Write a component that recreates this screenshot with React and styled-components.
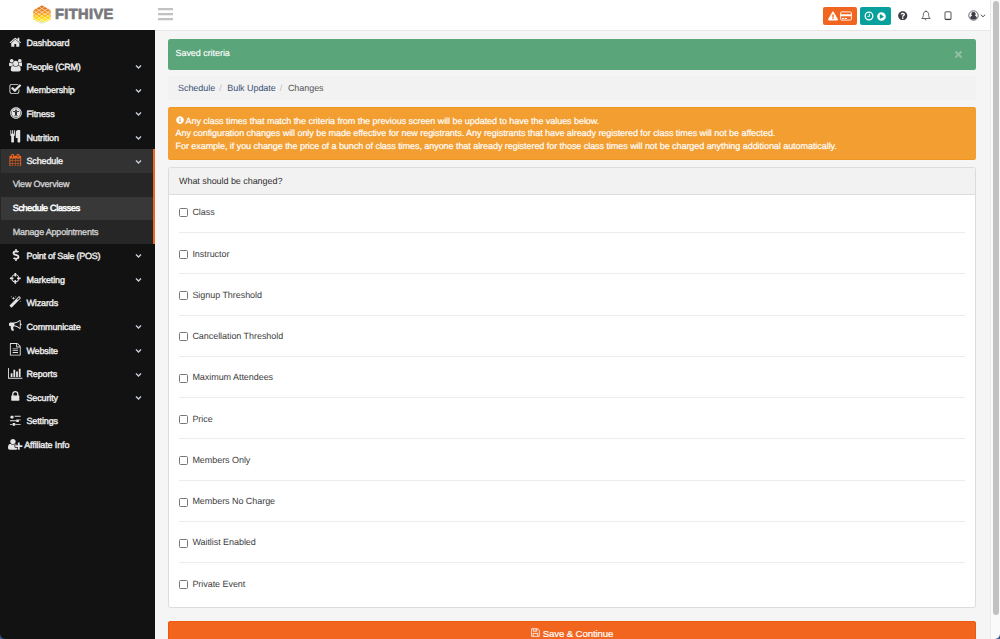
import React from "react";
import styled, { createGlobalStyle, css } from "styled-components";
import {
  FaUniversalAccess,
  FaDollarSign,
  FaExclamationTriangle,
  FaQuestionCircle,
  FaInfoCircle,
  FaPlayCircle,
} from "react-icons/fa";

const Global = createGlobalStyle`
  * { box-sizing: border-box; }
  body {
    margin: 0;
    overflow: hidden;
    background: #f5f5f5;
    color: #3e3e3e;
    font: 9px/12.86px "Liberation Sans", Arial, sans-serif;
    letter-spacing: -0.052px;
    text-rendering: geometricPrecision;
  }
`;

const GLYPHS = {
  home: ["0 0 1792 1792", "M1472 992v480q0 26-19 45t-45 19h-384v-384h-256v384h-384q-26 0-45-19t-19-45v-480q0-1 .5-3t.5-3l575-474 575 474q1 2 1 6zm223-69l-62 74q-8 9-21 11h-3q-13 0-21-7l-692-577-692 577q-12 8-24 7-13-2-21-11l-62-74q-8-10-7-23.5t11-21.5l719-599q32-26 76-26t76 26l244 204v-195q0-14 9-23t23-9h192q14 0 23 9t9 23v408l219 182q10 8 11 21.5t-7 23.5z"],
  users: ["-64 0 1920 1792", "M529 896q-162 5-265 128h-134q-82 0-138-40.5t-56-118.5q0-353 124-353 6 0 43.5 21t97.5 42.5 119 21.5q67 0 133-23-5 37-5 66 0 159 93 293zm1071 637q0 120-73 189.5t-194 69.5h-874q-121 0-194-69.5t-73-189.5q0-53 3.5-103.5t14-109 26.5-108.5 43-97.5 62-81 85.5-53.5 111.5-20q10 0 43 21.5t73 48 107 48 135 21.5 135-21.5 107-48 73-48 43-21.5q61 0 111.5 20t85.5 53.5 62 81 43 97.5 26.5 108.5 14 109 3.5 103.5zm-1024-1277q0 106-75 181t-181 75-181-75-75-181 75-181 181-75 181 75 75 181zm704 384q0 159-112.5 271.5t-271.5 112.5-271.5-112.5-112.5-271.5 112.5-271.5 271.5-112.5 271.5 112.5 112.5 271.5zm576 225q0 78-56 118.5t-138 40.5h-134q-103-123-265-128 93-134 93-293 0-29-5-66 66 23 133 23 59 0 119-21.5t97.5-42.5 43.5-21q124 0 124 353zm-128-609q0 106-75 181t-181 75-181-75-75-181 75-181 181-75 181 75 75 181z"],
  check: ["0 0 1792 1792", "M1472 930v318q0 119-84.5 203.5t-203.5 84.5h-832q-119 0-203.5-84.5t-84.5-203.5v-832q0-119 84.5-203.5t203.5-84.5h832q63 0 117 25 15 7 18 23 3 17-9 29l-49 49q-10 10-23 10-3 0-9-2-23-6-45-6h-832q-66 0-113 47t-47 113v832q0 66 47 113t113 47h832q66 0 113-47t47-113v-254q0-13 9-22l64-64q10-10 23-10 6 0 12 3 20 8 20 29zm231-489l-814 814q-24 24-57 24t-57-24l-430-430q-24-24-24-57t24-57l110-110q24-24 57-24t57 24l263 263 647-647q24-24 57-24t57 24l110 110q24 24 24 57t-24 57z"],
  cutlery: ["0 0 1792 1792", "M832 64v640q0 61-35.5 111t-92.5 70v779q0 52-38 90t-90 38h-128q-52 0-90-38t-38-90v-779q-57-20-92.5-70t-35.5-111v-640q0-26 19-45t45-19 45 19 19 45v416q0 26 19 45t45 19 45-19 19-45v-416q0-26 19-45t45-19 45 19 19 45v416q0 26 19 45t45 19 45-19 19-45v-416q0-26 19-45t45-19 45 19 19 45zm768 0v1600q0 52-38 90t-90 38h-128q-52 0-90-38t-38-90v-512h-224q-13 0-22.5-9.5t-9.5-22.5v-800q0-132 94-226t226-94h256q26 0 45 19t19 45z"],
  calendar: ["0 0 1792 1792", "M192 1664h288v-288h-288v288zm352 0h320v-288h-320v288zm-352-352h288v-320h-288v320zm352 0h320v-320h-320v320zm-352-384h288v-288h-288v288zm736 736h320v-288h-320v288zm-384-736h320v-288h-320v288zm768 736h288v-288h-288v288zm-384-352h320v-320h-320v320zm-352-864v-288q0-13-9.5-22.5t-22.5-9.5h-64q-13 0-22.5 9.5t-9.5 22.5v288q0 13 9.5 22.5t22.5 9.5h64q13 0 22.5-9.5t9.5-22.5zm736 864h288v-320h-288v320zm-384-384h320v-288h-320v288zm384 0h288v-288h-288v288zm32-480v-288q0-13-9.5-22.5t-22.5-9.5h-64q-13 0-22.5 9.5t-9.5 22.5v288q0 13 9.5 22.5t22.5 9.5h64q13 0 22.5-9.5t9.5-22.5zm384-64v1280q0 52-38 90t-90 38h-1408q-52 0-90-38t-38-90v-1280q0-52 38-90t90-38h128v-96q0-66 47-113t113-47h64q66 0 113 47t47 113v96h384v-96q0-66 47-113t113-47h64q66 0 113 47t47 113v96h128q52 0 90 38t38 90z"],
  crosshairs: ["0 0 1792 1792", "M1325 1024h-109q-26 0-45-19t-19-45v-128q0-26 19-45t45-19h109q-32-108-112.5-188.5t-188.5-112.5v109q0 26-19 45t-45 19h-128q-26 0-45-19t-19-45v-109q-108 32-188.5 112.5t-112.5 188.5h109q26 0 45 19t19 45v128q0 26-19 45t-45 19h-109q32 108 112.5 188.5t188.5 112.5v-109q0-26 19-45t45-19h128q26 0 45 19t19 45v109q108-32 188.5-112.5t112.5-188.5zm339-192v128q0 26-19 45t-45 19h-143q-37 161-154.5 278.5t-278.5 154.5v143q0 26-19 45t-45 19h-128q-26 0-45-19t-19-45v-143q-161-37-278.5-154.5t-154.5-278.5h-143q-26 0-45-19t-19-45v-128q0-26 19-45t45-19h143q37-161 154.5-278.5t278.5-154.5v-143q0-26 19-45t45-19h128q26 0 45 19t19 45v143q161 37 278.5 154.5t154.5 278.5h143q26 0 45 19t19 45z"],
  magic: ["0 0 1792 1792", "M1254 581l293-293-107-107-293 293zm447-293q0 27-18 45l-1286 1286q-18 18-45 18t-45-18l-198-198q-18-18-18-45t18-45l1286-1286q18-18 45-18t45 18l198 198q18 18 18 45zm-1351-190l98 30-98 30-30 98-30-98-98-30 98-30 30-98zm350 162l196 60-196 60-60 196-60-196-196-60 196-60 60-196zm930 478l98 30-98 30-30 98-30-98-98-30 98-30 30-98zm-640-640l98 30-98 30-30 98-30-98-98-30 98-30 30-98z"],
  bullhorn: ["0 0 1792 1792", "M1664 640q53 0 90.5 37.5t37.5 90.5-37.5 90.5-90.5 37.5v384q0 52-38 90t-90 38q-417-347-812-380-58 19-91 66t-31 100.5 40 92.5q-20 33-23 65.5t6 58 33.5 55 48 50 61.5 50.5q-29 58-111.5 83t-168.5 11.5-132-55.5q-7-23-29.5-87.5t-32-94.5-23-89-15-101 3.5-98.5 22-110.5h-122q-66 0-113-47t-47-113v-192q0-66 47-113t113-47h480q435 0 896-384 52 0 90 38t38 90v384zm-128 604v-954q-394 302-768 343v270q377 42 768 341z"],
  file: ["0 0 1792 1792", "M1596 380q28 28 48 76t20 88v1152q0 40-28 68t-68 28h-1344q-40 0-68-28t-28-68v-1600q0-40 28-68t68-28h896q40 0 88 20t76 48zm-444-244v376h376q-10-29-22-41l-313-313q-12-12-41-22zm384 1528v-1024h-416q-40 0-68-28t-28-68v-416h-768v1536h1280zm-1024-864q0-14 9-23t23-9h704q14 0 23 9t9 23v64q0 14-9 23t-23 9h-704q-14 0-23-9t-9-23v-64zm736 224q14 0 23 9t9 23v64q0 14-9 23t-23 9h-704q-14 0-23-9t-9-23v-64q0-14 9-23t23-9h704zm0 256q14 0 23 9t9 23v64q0 14-9 23t-23 9h-704q-14 0-23-9t-9-23v-64q0-14 9-23t23-9h704z"],
  chart: ["0 0 2048 1792", "M640 896v512h-256v-512h256zm384-512v1024h-256v-1024h256zm1024 1152v128h-2048v-1536h128v1408h1920zm-640-896v768h-256v-768h256zm384-384v1152h-256v-1152h256z"],
  lock: ["0 0 1792 1792", "M640 768h512v-192q0-106-75-181t-181-75-181 75-75 181v192zm832 96v576q0 40-28 68t-68 28h-960q-40 0-68-28t-28-68v-576q0-40 28-68t68-28h32v-192q0-184 132-316t316-132 316 132 132 316v192h32q40 0 68 28t28 68z"],
  sliders: ["0 0 1792 1792", "M480 1408v128h-352v-128h352zm352-128q26 0 45 19t19 45v256q0 26-19 45t-45 19h-256q-26 0-45-19t-19-45v-256q0-26 19-45t45-19h256zm160-384v128h-864v-128h864zm-640-512v128h-224v-128h224zm1312 1024v128h-736v-128h736zm-1088-1152q26 0 45 19t19 45v256q0 26-19 45t-45 19h-256q-26 0-45-19t-19-45v-256q0-26 19-45t45-19h256zm768 512q26 0 45 19t19 45v256q0 26-19 45t-45 19h-256q-26 0-45-19t-19-45v-256q0-26 19-45t45-19h256zm320 0v128h-224v-128h224zm0-512v128h-864v-128h864z"],
  userPlus: ["0 0 2048 1792", "M704 896q-159 0-271.5-112.5t-112.5-271.5 112.5-271.5 271.5-112.5 271.5 112.5 112.5 271.5-112.5 271.5-271.5 112.5zm960 128h352q13 0 22.5 9.5t9.5 22.5v192q0 13-9.5 22.5t-22.5 9.5h-352v352q0 13-9.5 22.5t-22.5 9.5h-192q-13 0-22.5-9.5t-9.5-22.5v-352h-352q-13 0-22.5-9.5t-9.5-22.5v-192q0-13 9.5-22.5t22.5-9.5h352v-352q0-13 9.5-22.5t22.5-9.5h192q13 0 22.5 9.5t9.5 22.5v352zm-736 224q0 52 38 90t90 38h256v238q-68 50-171 50h-874q-121 0-194-69t-73-190q0-53 3.5-103.5t14-109 26.5-108.5 43-97.5 62-81 85.5-53.5 111.5-20q19 0 39 17 79 61 154.5 91.5t164.5 30.5 164.5-30.5 154.5-91.5q20-17 39-17 132 0 217 96h-223q-52 0-90 38t-38 90v192z"],
};

const GlyphSvg = styled.svg`
  display: block;
  height: 12.6px;
  width: auto;
  fill: currentColor;
`;

const Glyph = ({ name }) => (
  <GlyphSvg viewBox={GLYPHS[name][0]}>
    <path d={GLYPHS[name][1]} />
  </GlyphSvg>
);

/* ---------- frame ---------- */

const Window = styled.div`
  display: flex;
  width: 1000px;
  height: 639px;
  overflow: hidden;
  position: relative;
`;

const Page = styled.div`
  flex: 1;
  display: flex;
  flex-direction: column;
  min-width: 0;
`;

const ScrollTrack = styled.div`
  width: 10px;
  padding: 1px 2px 0 2px;
  background: #fafafa;
  border-left: 1px solid #e9e9e9;
`;

const ScrollThumb = styled.div`
  width: 6px;
  height: 614px;
  border-radius: 3px;
  background: #c1c1c1;
`;

const Corner = styled.svg`
  position: absolute;
  bottom: 0;
  ${(p) => (p.$right ? "right: 0;" : "left: 0;")}
`;

/* ---------- header ---------- */

const Header = styled.header`
  display: flex;
  align-items: center;
  height: 31px;
  flex: none;
  background: linear-gradient(90deg, #121212 155px, #e7e7e7 155px) bottom / 100% 1px no-repeat #fff;
`;

const Brand = styled.div`
  display: flex;
  align-items: center;
  width: 155px;
  padding: 0 0 2px 33px;
  gap: 4px;
`;

const BrandName = styled.span`
  padding-top: 1px;
  font-size: 14.6px;
  line-height: 18px;
  font-weight: 700;
  letter-spacing: 0.4px;
  color: #77787b;
  -webkit-text-stroke: 0.7px #77787b;
`;

const MenuToggle = styled.div`
  display: flex;
  flex-direction: column;
  gap: 3px;
  margin: 0 auto 3px 3px;
`;

const ToggleBar = styled.span`
  width: 15px;
  height: 2px;
  background: #c2c2c2;
  box-shadow: 0 0.5px 0 #dedede;
`;

const Actions = styled.div`
  display: flex;
  align-items: center;
  height: 30px;
  padding-right: 4.5px;
  color: #3c3f45;
`;

const ActionButton = styled.div`
  display: flex;
  align-items: center;
  justify-content: center;
  gap: 2.5px;
  width: ${(p) => p.$width}px;
  height: 18px;
  margin: 1px 2.5px 0 0;
  border-radius: 2px;
  color: #fff;
  background: ${(p) => p.$color};
`;

const ActionIcon = styled.span`
  display: flex;
  align-items: center;
  justify-content: ${(p) => (p.$end ? "flex-end" : "center")};
  width: ${(p) => p.$width}px;
`;

/* ---------- sidebar ---------- */

const Body = styled.div`
  display: flex;
  flex: 1;
  min-height: 0;
`;

const Sidebar = styled.nav`
  width: 155px;
  flex: none;
  background: #121212;
`;

const ActiveGroup = styled.div`
  border-right: 2px solid #f2651f;
  padding-left: 1px;
  background: #262626;
`;

const NavItem = styled.div`
  display: flex;
  align-items: center;
  height: 23.67px;
  padding: 0 ${(p) => (p.$active ? 11 : 13)}px 0 ${(p) => (p.$active ? 5 : 6)}px;
  color: #ececec;
  background: ${(p) => (p.$active ? "#323232" : "transparent")};

  > svg {
    margin-top: 1.4px;
  }
`;

const NavIcon = styled.span`
  display: flex;
  justify-content: center;
  width: 19px;
  margin: 0 ${(p) => (p.$tight ? -0.8 : 1.4)}px 2px 0;
  color: ${(p) => (p.$active ? "#f2651f" : "#e4e4e4")};
`;

const NavLabel = styled.span`
  flex: 1;
  padding-top: 1.2px;
  letter-spacing: ${(p) => (p.$long ? -0.24 : -0.12)}px;
  -webkit-text-stroke: 0.4px currentColor;
  white-space: nowrap;
`;

const SubItem = styled.div`
  display: flex;
  align-items: center;
  height: 23.67px;
  padding-left: 11.7px;
  letter-spacing: -0.21px;
  -webkit-text-stroke: 0.35px currentColor;
  color: #cfcfcf;
  ${(p) =>
    p.$current &&
    css`
      color: #fff;
      background: #383838;
      letter-spacing: -0.3px;
      -webkit-text-stroke-width: 0.5px;
    `}
`;

/* ---------- content ---------- */

const Content = styled.main`
  flex: 1;
  min-width: 0;
  padding: 8px 13.6px 0 13px;
  background: #f5f5f5;
`;

const SuccessAlert = styled.div`
  display: flex;
  justify-content: space-between;
  height: 31px;
  padding: 8px 13px 0 7.5px;
  border-radius: 2.5px;
  color: #fff;
  background: #5ba57a;
  -webkit-text-stroke: 0.15px #fff;

  svg {
    margin-top: 2.5px;
  }
`;

const Breadcrumb = styled.div`
  display: flex;
  align-items: center;
  height: 24px;
  margin: 6px 0 7px;
  padding: 1px 0 0 10px;
  background: #f2f2f2;
  color: #555;
`;

const Crumb = styled.a`
  color: #3a5172;
`;

const Slash = styled.span`
  padding: 0 5.7px 0 4px;
  color: #bbb;
`;

const Notice = styled.div`
  height: 53px;
  padding: 6.5px 7.5px;
  border: 1px solid #ee9722;
  border-left-width: 0;
  border-right-width: 0;
  border-radius: 2.5px;
  color: #fff;
  background: #f39e30;
  white-space: nowrap;
  -webkit-text-stroke: 0.2px #fff;

  svg {
    display: inline-block;
    vertical-align: -0.8px;
    margin-right: 2px;
  }
`;

const Panel = styled.section`
  height: 441px;
  margin-top: 7px;
  border: 1px solid #dcdcdc;
  border-radius: 2.5px;
  background: #fff;
`;

const PanelTitle = styled.div`
  display: flex;
  align-items: center;
  height: 27px;
  padding-left: 10px;
  border-bottom: 1px solid #dcdcdc;
  background: #f2f2f2;
  color: #333;
`;

const Criteria = styled.div`
  padding: 0 10px;
`;

const Criterion = styled.label`
  display: flex;
  align-items: center;
  height: 41.28px;
  gap: 4.4px;
  padding-top: 1.6px;
  border-bottom: 1px solid #ececec;

  &:first-child {
    height: 38px;
    padding: 0 0 2.4px;
  }
  &:last-child {
    border-bottom-color: transparent;
  }
`;

const Box = styled.input`
  appearance: none;
  width: 9px;
  height: 9px;
  margin: 1px 0 0;
  border: 1px solid #777;
  border-radius: 1.5px;
  background: #fff;
`;

const SaveButton = styled.button`
  display: flex;
  align-items: flex-start;
  justify-content: center;
  gap: 2.5px;
  width: 100%;
  height: 27px;
  margin-top: 13px;
  padding: 4.5px 0 0 0;
  border: 1px solid #ee5a12;
  border-radius: 2px;
  color: #fff;
  background: #f2651f;
  font: 9.6px/13px "Liberation Sans", Arial, sans-serif;
  letter-spacing: -0.1px;
  -webkit-text-stroke: 0.2px #fff;

  svg {
    margin-top: 1.5px;
  }
`;

const Chevron = () => (
  <svg width="7" height="6" viewBox="0 0 7 6" fill="none" stroke="#c5cfdd" strokeWidth="1.4">
    <path d="M1 1.6 3.5 4 6 1.6" />
  </svg>
);

const LOGO_ROWS = ["#e0741f", "#e57c24", "#ea8a2a", "#ef962c", "#f6a81f", "#fbbd12", "#fdd00c", "#fde01c", "#f3e76a", "#dedede"];

const Logo = () => (
  <svg width="18" height="20" viewBox="0 0 18 20">
    <clipPath id="hive">
      <path d="M9 .2 17.8 5V14.6L9 19.6.2 14.6V5z" />
    </clipPath>
    <g clipPath="url(#hive)">
      {LOGO_ROWS.map((fill, row) =>
        [-2, -1, 0, 1, 2].map((col) => {
          const x = 9 + col * 5.8 + (row % 2 ? 2.9 : 0);
          const y = 1.6 + row * 1.85;
          return <path key={`${row}${col}`} d={`M${x} ${y - 1.6}l2.65 1.6-2.65 1.6-2.65-1.6z`} fill={fill} />;
        })
      )}
    </g>
  </svg>
);

const CardIcon = () => (
  <svg width="12" height="10" viewBox="0 0 12 10">
    <rect x=".6" y=".9" width="10.8" height="8.2" rx="1" fill="none" stroke="#fff" strokeWidth=".9" />
    <path d="M.6 3.3h10.8v2H.6zM2 7h1.8v.9H2zM4.5 7h2.4v.9H4.5z" fill="#fff" />
  </svg>
);

const ClockIcon = () => (
  <svg width="10" height="10" viewBox="0 0 10 10" fill="none" stroke="#fff">
    <circle cx="5" cy="5" r="3.8" strokeWidth="1.3" />
    <path d="M5.4 2.7v2.7H3.4" strokeWidth=".9" />
  </svg>
);

const BellIcon = () => (
  <svg width="10" height="11" viewBox="0 0 10 11" fill="none" stroke="currentColor" strokeWidth=".8">
    <path d="M5 .4v1M.8 8.5C2 7.5 2.4 6.2 2.4 4.3 2.4 2.6 3.4 1.5 5 1.5s2.6 1.1 2.6 2.8c0 1.9.4 3.2 1.6 4.2z" />
    <path d="M4 8.8c0 .8.4 1.3 1.2 1.3" />
  </svg>
);

const TabletIcon = () => (
  <svg width="8" height="10" viewBox="0 0 8 10" fill="none" stroke="currentColor">
    <rect x="1" y=".8" width="6" height="7.8" rx=".8" strokeWidth=".9" />
    <path d="M1 8.3h6" strokeWidth="1.1" />
  </svg>
);

const AccountIcon = () => (
  <svg width="18" height="11" viewBox="0 0 18 11">
    <circle cx="5.5" cy="5.5" r="4.7" fill="none" stroke="currentColor" strokeWidth=".8" />
    <path d="M5.5 1.9a2.1 2.1 0 0 1 1.2 3.9c1.2.2 2 1 2.2 2.1A4.2 4.2 0 0 1 5.5 9.6 4.2 4.2 0 0 1 2.1 7.9c.2-1.1 1-1.9 2.2-2.1a2.1 2.1 0 0 1 1.2-3.9z" fill="currentColor" />
    <path d="M12.8 4.7 15 6.8l2.2-2.1" fill="none" stroke="currentColor" strokeWidth=".9" />
  </svg>
);

const SaveIcon = () => (
  <svg width="9" height="9" viewBox="0 0 9 9" fill="none" stroke="#fff" strokeWidth=".8">
    <path d="M.6.7h5.9l1.8 1.8v5.8H.6zM2.4.7v2.5h3.4V.7M2.2 8.3V5.4h4.5v2.9M4.9 1v1.6" />
  </svg>
);

const CloseIcon = () => (
  <svg width="9" height="9" viewBox="0 0 9 9" stroke="#93bfa5" strokeWidth="2">
    <path d="M1.5 1.5l6 6M7.5 1.5l-6 6" />
  </svg>
);

const before = [
  { label: "Dashboard", icon: <Glyph name="home" />, leaf: true },
  { label: "People (CRM)", icon: <Glyph name="users" />, long: true },
  { label: "Membership", icon: <Glyph name="check" /> },
  { label: "Fitness", icon: <FaUniversalAccess size={12} /> },
  { label: "Nutrition", icon: <Glyph name="cutlery" /> },
];

const after = [
  { label: "Point of Sale (POS)", icon: <FaDollarSign size={12} />, long: true },
  { label: "Marketing", icon: <Glyph name="crosshairs" /> },
  { label: "Wizards", icon: <Glyph name="magic" />, leaf: true },
  { label: "Communicate", icon: <Glyph name="bullhorn" /> },
  { label: "Website", icon: <Glyph name="file" /> },
  { label: "Reports", icon: <Glyph name="chart" /> },
  { label: "Security", icon: <Glyph name="lock" /> },
  { label: "Settings", icon: <Glyph name="sliders" />, leaf: true },
  { label: "Affiliate Info", icon: <Glyph name="userPlus" />, leaf: true, tight: true },
];

const criteria = [
  "Class",
  "Instructor",
  "Signup Threshold",
  "Cancellation Threshold",
  "Maximum Attendees",
  "Price",
  "Members Only",
  "Members No Charge",
  "Waitlist Enabled",
  "Private Event",
];

const NavRow = ({ label, icon, leaf, tight, active, long }) => (
  <NavItem $active={active}>
    <NavIcon $active={active} $tight={tight}>{icon}</NavIcon>
    <NavLabel $long={long}>{label}</NavLabel>
    {!leaf && <Chevron />}
  </NavItem>
);

export default function App() {
  return (
    <Window>
      <Global />
      <Page>
        <Header>
          <Brand>
            <Logo />
            <BrandName>FITHIVE</BrandName>
          </Brand>
          <MenuToggle>
            <ToggleBar />
            <ToggleBar />
            <ToggleBar />
          </MenuToggle>
          <Actions>
            <ActionButton $width={34} $color="#f2651f">
              <FaExclamationTriangle size={10} />
              <CardIcon />
            </ActionButton>
            <ActionButton $width={31} $color="#07a09c">
              <ClockIcon />
              <FaPlayCircle size={9} />
            </ActionButton>
            <ActionIcon $width={20}><FaQuestionCircle size={9.5} /></ActionIcon>
            <ActionIcon $width={25}><BellIcon /></ActionIcon>
            <ActionIcon $width={20}><TabletIcon /></ActionIcon>
            <ActionIcon $width={27.5} $end><AccountIcon /></ActionIcon>
          </Actions>
        </Header>
        <Body>
          <Sidebar>
            {before.map((item) => <NavRow key={item.label} {...item} />)}
            <ActiveGroup>
              <NavRow label="Schedule" icon={<Glyph name="calendar" />} active />
              <SubItem>View Overview</SubItem>
              <SubItem $current>Schedule Classes</SubItem>
              <SubItem>Manage Appointments</SubItem>
            </ActiveGroup>
            {after.map((item) => <NavRow key={item.label} {...item} />)}
          </Sidebar>
          <Content>
            <SuccessAlert>
              <span>Saved criteria</span>
              <CloseIcon />
            </SuccessAlert>
            <Breadcrumb>
              <Crumb>Schedule</Crumb>
              <Slash>/</Slash>
              <Crumb>Bulk Update</Crumb>
              <Slash>/</Slash>
              <span>Changes</span>
            </Breadcrumb>
            <Notice>
              <FaInfoCircle size={8} />
              Any class times that match the criteria from the previous screen will be updated to have the values below.
              <br />
              Any configuration changes will only be made effective for new registrants. Any registrants that have already registered for class times will not be affected.
              <br />
              For example, if you change the price of a bunch of class times, anyone that already registered for those class times will not be charged anything additional automatically.
            </Notice>
            <Panel>
              <PanelTitle>What should be changed?</PanelTitle>
              <Criteria>
                {criteria.map((name) => (
                  <Criterion key={name}>
                    <Box type="checkbox" />
                    {name}
                  </Criterion>
                ))}
              </Criteria>
            </Panel>
            <SaveButton>
              <SaveIcon />
              Save &amp; Continue
            </SaveButton>
          </Content>
        </Body>
      </Page>
      <ScrollTrack>
        <ScrollThumb />
      </ScrollTrack>
      <Corner width="5" height="5" viewBox="0 0 5 5">
        <path d="M0 0Q.5 4.5 5 5H0z" fill="#35568c" />
      </Corner>
      <Corner $right width="5" height="5" viewBox="0 0 5 5">
        <path d="M5 0Q4.5 4.5 0 5H5z" fill="#35568c" />
      </Corner>
    </Window>
  );
}
